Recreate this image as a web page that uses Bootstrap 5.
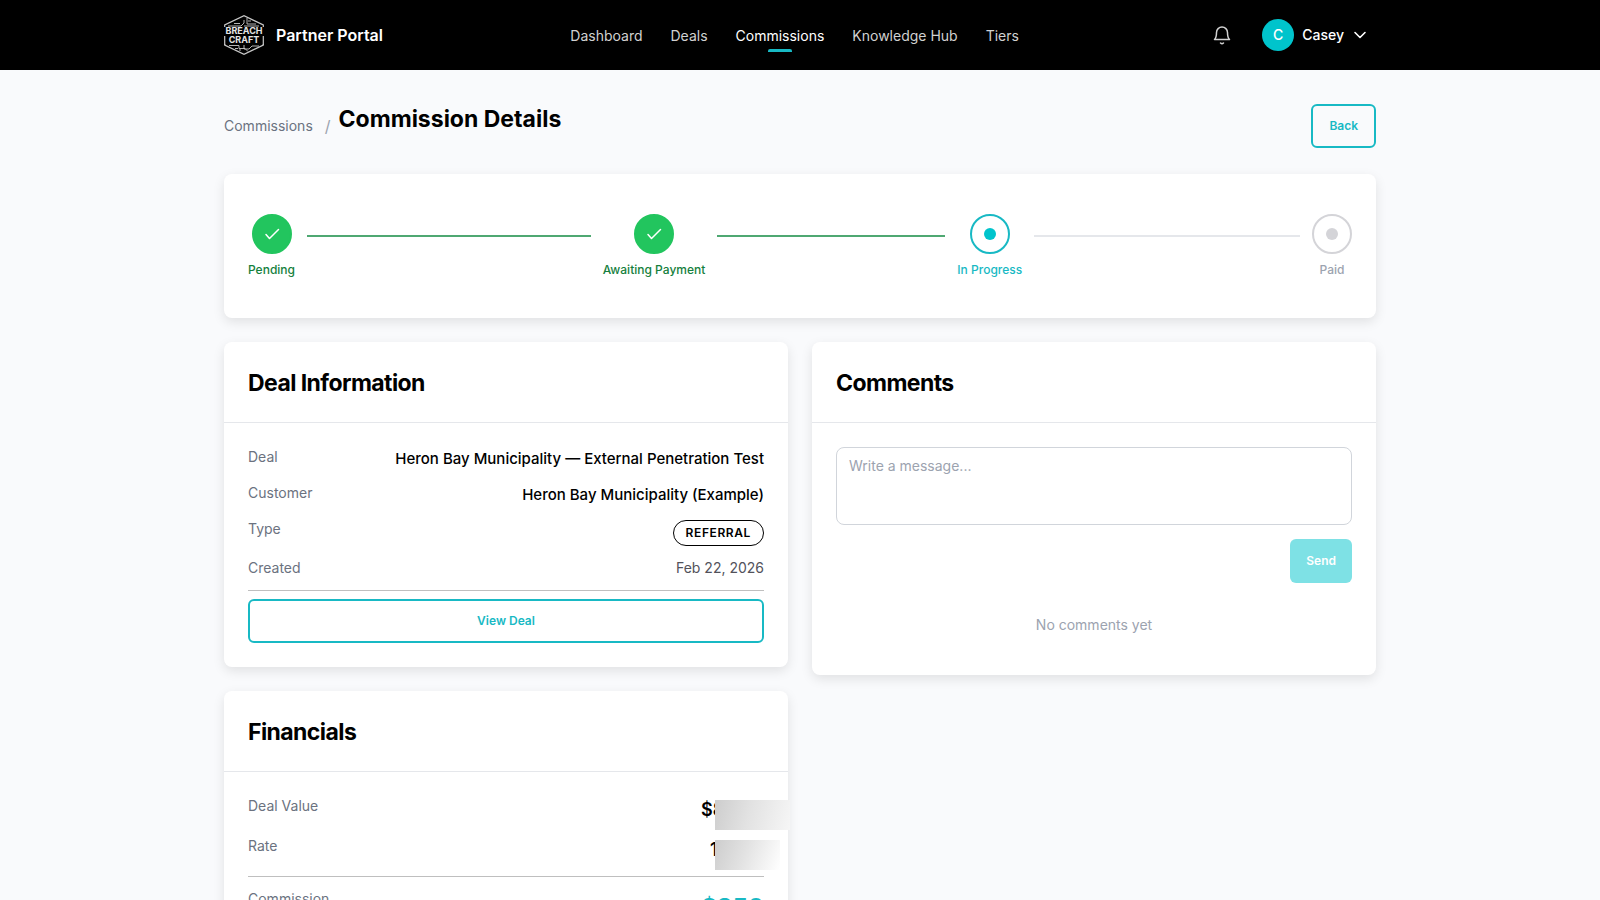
<!DOCTYPE html>
<html lang="en">
<head>
<meta charset="utf-8">
<meta name="viewport" content="width=device-width, initial-scale=1">
<title>Commission Details – Partner Portal</title>
<link href="https://cdn.jsdelivr.net/npm/bootstrap@5.3.0/dist/css/bootstrap.min.css" rel="stylesheet">
<style>
  :root { --teal: #00c4cc; --teal-line: #18b9c4; --green: #22c55e; }
  body { font-family: Inter, "Liberation Sans", sans-serif; font-size: 14px; line-height: 20px; color: #000; background: #f9fafc; overflow-x: hidden; }
  .shell { max-width: 1200px; padding-inline: 24px; margin-inline: auto; width: 100%; }
  .topbar { background: #000; min-height: 70px; padding: 0; }
  .brand-name { font-size: 16px; line-height: 24px; font-weight: 600; color: #fff; }
  .main-nav { gap: 28px; }
  .main-nav .nav-link { padding: 9px 0 7px; color: #d1d1d1; position: relative; }
  .main-nav .nav-link.active { color: #fff; }
  .main-nav .nav-link.active::after { content: ""; position: absolute; left: 50%; bottom: 1px; width: 24px; height: 3px; margin-left: -12px; background: var(--teal-line); border-radius: 2px 2px 0 0; }
  .bell-btn { width: 32px; height: 40px; padding: 8px 4px; margin-right: 24px; border: 0; background: none; color: #d1d1d1; line-height: 0; }
  .user-btn { border: 0; background: none; color: #fff; padding: 0 8px 0 0; font-weight: 500; }
  .avatar { width: 32px; height: 32px; border-radius: 50%; background: var(--teal); }
  .page-head { padding-top: 34px; margin-bottom: 26px; }
  .page-title { font-size: 23px; line-height: 30px; font-weight: 700; margin: 0 0 14px; }
  .crumb { color: #6b7280; text-decoration: none; }
  .slash { color: #9ca3af; font-size: 16px; }
  .btn-line, .btn-send { min-height: 44px; padding: 8px 16px; font-size: 12px; line-height: 16px; font-weight: 600; border-radius: 6px; }
  .btn-line { border: 2px solid var(--teal-line); color: var(--teal-line); background: transparent; }
  .btn-line:hover { background: #e6fafa; color: var(--teal-line); border-color: var(--teal-line); }
  .btn-send, .btn-send:disabled { background: var(--teal); color: #fff; border: 0; opacity: .5; }
  .panel { background: #fff; border: 0; border-radius: 8px; box-shadow: 0 4px 12px rgba(0,0,0,.1); }
  .panel-head { padding: 25px 24px 23px; border-bottom: 1px solid #e5e7eb; }
  .panel-head h2 { font-size: 23px; line-height: 32px; font-weight: 700; letter-spacing: -0.025em; margin: 0; }
  .panel-body { padding: 24px; }
  .progress-panel { padding: 40px 24px; }
  .step { flex: 1 1 0; }
  .step-dot { width: 40px; height: 40px; border-radius: 50%; border: 2px solid #d4d4d8; background: #fff; }
  .step-dot i { width: 12px; height: 12px; border-radius: 50%; background: #d4d4d8; }
  .step-name { font-size: 12px; line-height: 16px; font-weight: 500; color: #9ca3af; white-space: nowrap; }
  .step-line { flex: 1; height: 2px; margin: 21px 12px 0; background: #e5e7eb; }
  .done .step-dot { background: var(--green); border-color: var(--green); }
  .done .step-name { color: #15803d; }
  .done .step-line { background: #4fa872; }
  .current .step-dot { border-color: var(--teal-line); }
  .current .step-dot i { background: var(--teal); }
  .current .step-name { color: var(--teal-line); }
  .facts { row-gap: 12px; }
  .facts dt { font-weight: 400; color: #6b7280; }
  .facts dd { margin: 0; font-size: 15px; line-height: 24px; font-weight: 500; }
  .facts .plain { font-size: 14px; line-height: 20px; font-weight: 400; color: #52525b; }
  .facts .figure-val { font-size: 18px; line-height: 28px; font-weight: 600; }
  .facts .total { font-size: 24px; line-height: 38px; font-weight: 700; color: var(--teal-line); }
  .facts .total-row { padding-top: 12px; }
  .tag { display: block; margin-top: 1px; padding: 4px 12px; border: 1px solid #000; border-radius: 13px; font-size: 12px; line-height: 16px; font-weight: 600; letter-spacing: .05em; }
  .rule { border-top: 1px solid #bfbfbf; }
  .masked { position: relative; width: 63px; }
  .masked.narrow { width: 54px; }
  .masked::after { content: ""; position: absolute; top: 4px; left: 14px; width: 75px; height: 30px; background: linear-gradient(105deg, #cdcdcd, #e2e2e2 45%, #f6f6f6); }
  .masked.narrow::after { left: 5px; width: 65px; background: linear-gradient(110deg, #cdcdcd, #e2e2e2 45%, #fff); }
  .message { height: 78px; padding: 8px 12px; font-size: 14px; line-height: 20px; border: 1px solid #d1d5db; border-radius: 8px; resize: none; }
  .message::placeholder { color: #9ca3af; }
  .send-row { margin-top: 14px; }
  .empty-note { color: #9ca3af; margin: 32px 0 16px; }
</style>
</head>
<body>
<header class="navbar topbar">
  <div class="shell d-flex align-items-center justify-content-between">
    <a href="#" class="d-flex align-items-center text-decoration-none">
      <svg width="40" height="40" viewBox="0 0 40 40" fill="none" stroke="#c8c8c8" role="img" aria-label="BreachCraft">
        <path d="M.7 12V10L20 .7 39.300 10v2M.7 29v1L20 39.300 39.300 30v-1" stroke-width="1.200"/>
        <path d="M.7 21v9M39.300 21v9" stroke-width="1.200"/>
        <path d="M4 11h13l3-3V5M10 8.500h6M23 3v6h9M20 11h15M24 6h3M5 30.500h10v3h6l3 3M20 30v4h5l3-3h7M11 33.500h3M16 36v-2" stroke-width=".9"/>
        <text x="20" y="19" text-anchor="middle" font-family="Inter, sans-serif" font-size="9" font-weight="700" fill="#e5e5e5" stroke="none">BREACH</text>
        <text x="20" y="28" text-anchor="middle" font-family="Inter, sans-serif" font-size="9" font-weight="700" fill="#e5e5e5" stroke="none">CRAFT</text>
      </svg>
      <span class="brand-name ms-2 ps-1">Partner Portal</span>
    </a>
    <nav class="nav main-nav" aria-label="Main">
      <a class="nav-link" href="#">Dashboard</a>
      <a class="nav-link" href="#">Deals</a>
      <a class="nav-link active" aria-current="page" href="#">Commissions</a>
      <a class="nav-link" href="#">Knowledge Hub</a>
      <a class="nav-link" href="#">Tiers</a>
    </nav>
    <div class="d-flex align-items-center">
      <button class="bell-btn" type="button" aria-label="Notifications">
        <svg width="24" height="24" viewBox="0 0 24 24" fill="none" stroke="currentColor" stroke-width="1.500" stroke-linecap="round" stroke-linejoin="round">
          <path d="M4.500 16.500c1.500-1.500 2-3.500 2-7a5.500 5.500 0 0 1 11 0c0 3.500.5 5.500 2 7zM10.500 20c1 .9 2 .9 3 0"/>
        </svg>
      </button>
      <button class="user-btn d-flex align-items-center gap-2" type="button">
        <span class="avatar d-flex align-items-center justify-content-center">C</span>
        <span>Casey</span>
        <svg width="16" height="16" viewBox="0 0 16 16" fill="none" stroke="currentColor" stroke-width="1.600" stroke-linecap="round" stroke-linejoin="round"><path d="M3 5.500l5 5 5-5"/></svg>
      </button>
    </div>
  </div>
</header>

<main class="shell">
  <div class="page-head d-flex align-items-center justify-content-between">
    <div class="d-flex align-items-center gap-2">
      <a class="crumb me-1" href="#">Commissions</a>
      <span class="slash">/</span>
      <h1 class="page-title">Commission Details</h1>
    </div>
    <button class="btn btn-line" type="button">Back</button>
  </div>

  <section class="panel progress-panel d-flex mb-4" aria-label="Progress">
    <div class="step done d-flex">
      <div class="d-flex flex-column align-items-center gap-2">
        <span class="step-dot d-flex align-items-center justify-content-center"><svg width="20" height="20" viewBox="0 0 20 20" fill="none" stroke="#fff" stroke-width="1.500" stroke-linecap="round" stroke-linejoin="round"><path d="M4 10.500l3.500 4L16.500 5.500"/></svg></span>
        <span class="step-name">Pending</span>
      </div>
      <div class="step-line"></div>
    </div>
    <div class="step done d-flex">
      <div class="d-flex flex-column align-items-center gap-2">
        <span class="step-dot d-flex align-items-center justify-content-center"><svg width="20" height="20" viewBox="0 0 20 20" fill="none" stroke="#fff" stroke-width="1.500" stroke-linecap="round" stroke-linejoin="round"><path d="M4 10.500l3.500 4L16.500 5.500"/></svg></span>
        <span class="step-name">Awaiting Payment</span>
      </div>
      <div class="step-line"></div>
    </div>
    <div class="step current d-flex">
      <div class="d-flex flex-column align-items-center gap-2">
        <span class="step-dot d-flex align-items-center justify-content-center"><i></i></span>
        <span class="step-name">In Progress</span>
      </div>
      <div class="step-line"></div>
    </div>
    <div class="d-flex flex-column align-items-center gap-2">
      <span class="step-dot d-flex align-items-center justify-content-center"><i></i></span>
      <span class="step-name">Paid</span>
    </div>
  </section>

  <div class="row g-4">
    <div class="col-6 d-flex flex-column gap-4">
      <section class="panel">
        <div class="panel-head"><h2>Deal Information</h2></div>
        <div class="panel-body">
          <dl class="facts d-grid mb-2 pb-1">
            <div class="d-flex justify-content-between"><dt>Deal</dt><dd>Heron Bay Municipality — External Penetration Test</dd></div>
            <div class="d-flex justify-content-between"><dt>Customer</dt><dd>Heron Bay Municipality (Example)</dd></div>
            <div class="d-flex justify-content-between"><dt>Type</dt><dd><span class="tag">REFERRAL</span></dd></div>
            <div class="d-flex justify-content-between"><dt>Created</dt><dd class="plain">Feb 22, 2026</dd></div>
          </dl>
          <div class="rule pt-2"><button class="btn btn-line w-100" type="button">View Deal</button></div>
        </div>
      </section>
      <section class="panel">
        <div class="panel-head"><h2>Financials</h2></div>
        <div class="panel-body">
          <dl class="facts d-grid m-0">
            <div class="d-flex justify-content-between"><dt>Deal Value</dt><dd class="figure-val masked">$8</dd></div>
            <div class="d-flex justify-content-between"><dt>Rate</dt><dd class="figure-val masked narrow">1</dd></div>
            <div class="rule total-row d-flex justify-content-between"><dt>Commission</dt><dd class="total">$850</dd></div>
          </dl>
        </div>
      </section>
    </div>
    <div class="col-6">
      <section class="panel">
        <div class="panel-head"><h2>Comments</h2></div>
        <div class="panel-body">
          <textarea class="form-control message" aria-label="Message" placeholder="Write a message..."></textarea>
          <div class="send-row d-flex justify-content-end">
            <button class="btn btn-send" type="button" disabled>Send</button>
          </div>
          <p class="empty-note text-center">No comments yet</p>
        </div>
      </section>
    </div>
  </div>
</main>
<script src="https://cdn.jsdelivr.net/npm/bootstrap@5.3.0/dist/js/bootstrap.bundle.min.js"></script>
</body>
</html>
